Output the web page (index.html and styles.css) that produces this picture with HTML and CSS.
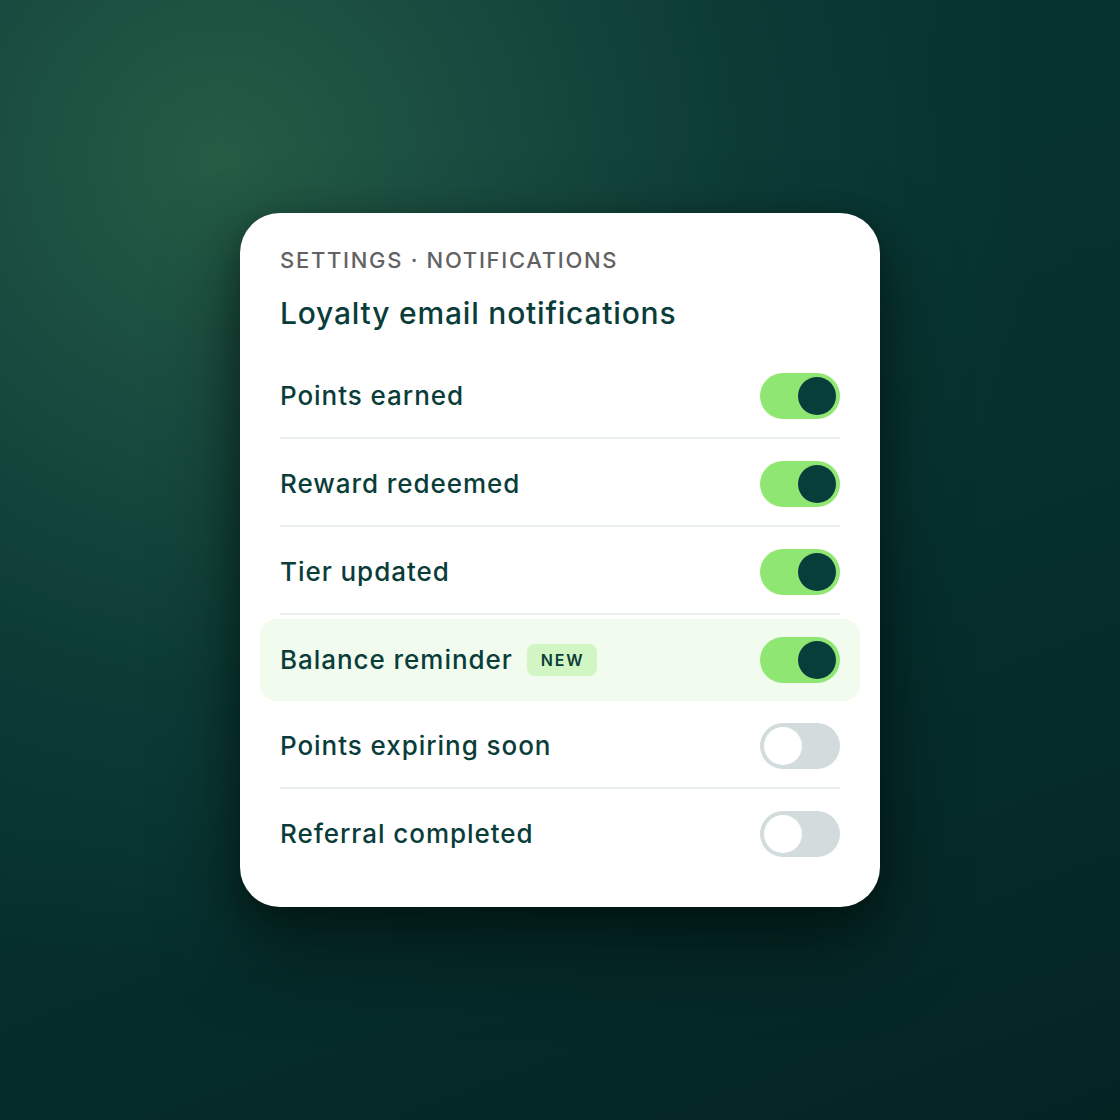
FILE: index.html
```html
<!DOCTYPE html>
<html lang="en">
<head>
<meta charset="utf-8">
<title>Loyalty email notifications</title>
<link rel="stylesheet" href="styles.css">
</head>
<body>
<main class="stage">
  <section class="card">
    <p class="eyebrow">SETTINGS · NOTIFICATIONS</p>
    <h1 class="title">Loyalty email notifications</h1>
    <ul class="list">
      <li class="row"><span class="label">Points earned</span><span class="toggle on"><span class="knob"></span></span></li>
      <li class="row"><span class="label">Reward redeemed</span><span class="toggle on"><span class="knob"></span></span></li>
      <li class="row"><span class="label">Tier updated</span><span class="toggle on"><span class="knob"></span></span></li>
      <li class="row highlight"><span class="label">Balance reminder <span class="badge">NEW</span></span><span class="toggle on"><span class="knob"></span></span></li>
      <li class="row"><span class="label">Points expiring soon</span><span class="toggle off"><span class="knob"></span></span></li>
      <li class="row last"><span class="label">Referral completed</span><span class="toggle off"><span class="knob"></span></span></li>
    </ul>
  </section>
</main>
</body>
</html>
```
FILE: styles.css
```css
* { box-sizing: border-box; }
html, body { margin: 0; padding: 0; }
body {
  width: 1120px;
  height: 1120px;
  overflow: hidden;
  font-family: "Inter", "Noto Sans", sans-serif;
  background:
    radial-gradient(circle at 220px 160px, #245c44 0%, #1a4d40 18%, #0c3b36 40%, rgba(6,49,47,0) 62%),
    linear-gradient(160deg, #06332f 0%, #05302e 55%, #042424 100%);
}
.stage {
  height: 1120px;
  display: flex;
  justify-content: center;
  padding-top: 213px;
}
.card {
  width: 640px;
  height: 694px;
  background: #ffffff;
  border-radius: 40px;
  padding: 34px 40px 32px;
  box-shadow: 0 40px 80px rgba(0, 12, 10, 0.55), 0 10px 30px rgba(0, 10, 8, 0.35);
  color: #0a3d3a;
}
.eyebrow {
  margin: 0;
  font-size: 22px;
  font-weight: 500;
  letter-spacing: 1.7px;
  color: #626262;
  line-height: 26px;
}
.title {
  margin: 22px 0 0;
  font-size: 30px;
  font-weight: 500;
  line-height: 36px;
  letter-spacing: 0.8px;
  color: #0a3d3a;
}
.list {
  list-style: none;
  margin: 20px 0 0;
  padding: 0;
}
.row {
  display: flex;
  align-items: center;
  justify-content: space-between;
  padding: 22px 0 18px;
  border-bottom: 2px solid #e9eeee;
}
.row.highlight {
  border-bottom: none;
  margin: 4px -20px 0;
  padding: 18px 20px;
  background: #f1fbee;
  border-radius: 16px;
}
.row.last { border-bottom: none; }
.label {
  display: flex;
  align-items: center;
  font-size: 26px;
  font-weight: 500;
  letter-spacing: 0.95px;
  color: #0a3d3a;
  line-height: 30px;
}
.badge {
  margin-left: 14px;
  background: #d2f5c4;
  color: #0a3d3a;
  font-size: 16px;
  font-weight: 600;
  letter-spacing: 1.8px;
  line-height: 32px;
  height: 32px;
  padding: 0 13px 0 14px;
  border-radius: 8px;
}
.toggle {
  width: 80px;
  height: 46px;
  border-radius: 23px;
  display: flex;
  align-items: center;
  padding: 0 4px;
  flex: none;
}
.toggle.on { background: #8fe673; justify-content: flex-end; }
.toggle.off { background: #d3dcdc; justify-content: flex-start; }
.knob {
  width: 38px;
  height: 38px;
  border-radius: 50%;
}
.toggle.on .knob { background: #073d3a; }
.toggle.off .knob { background: #ffffff; }
```
